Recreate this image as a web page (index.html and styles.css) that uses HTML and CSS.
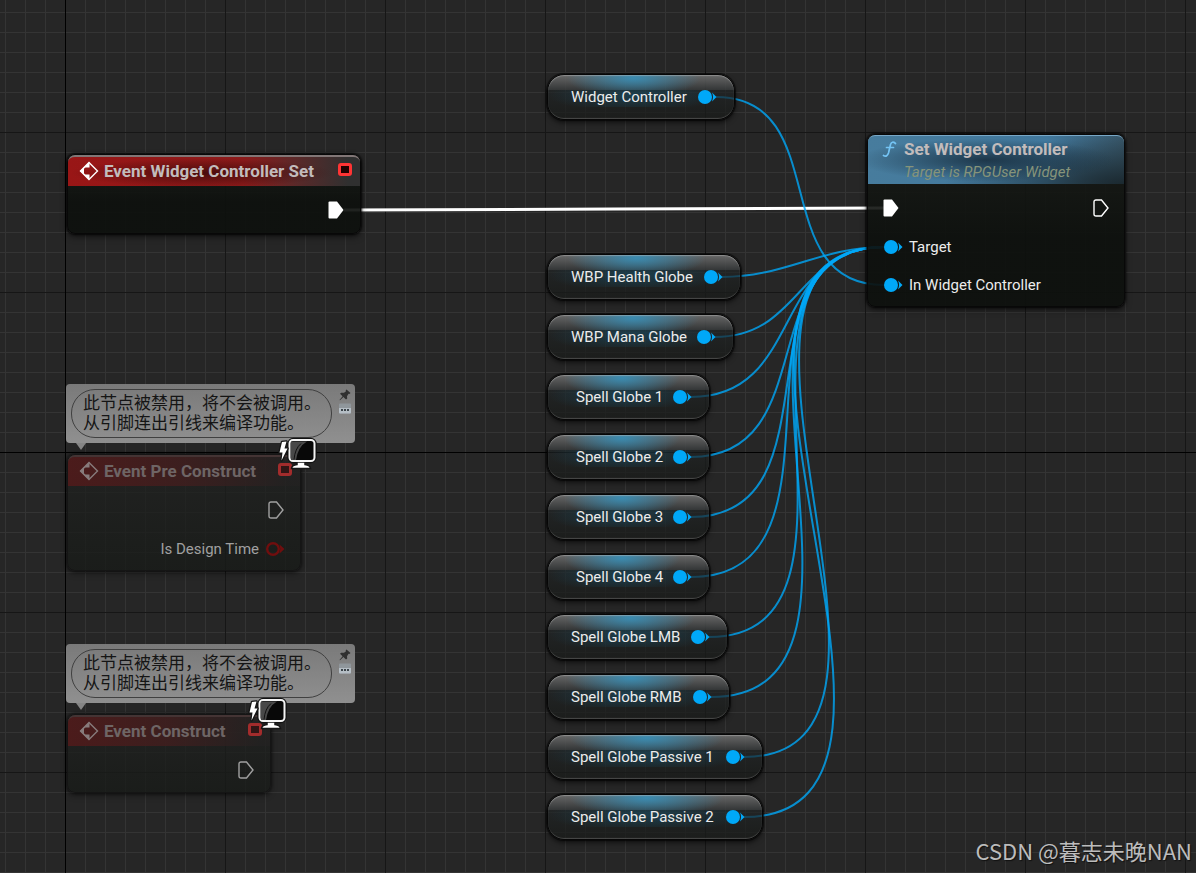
FILE: index.html
```html
<!DOCTYPE html>
<html lang="zh-CN">
<head>
<meta charset="utf-8">
<title>Event Graph</title>
<link rel="stylesheet" href="styles.css">
</head>
<body>
<svg class="defs" aria-hidden="true">
  <symbol id="event" viewBox="0 0 20 20">
    <path d="M10 1.500 18.500 10 10 18.500 1.500 10Z" fill="none" stroke="currentColor" stroke-width="1.400"/>
    <path d="M10.500 1v5.500H6.500Q5 6.500 5 8v4q0 1.500 1.500 1.500h4V19L1 10Z" fill="currentColor"/>
  </symbol>
  <symbol id="exec" viewBox="0 0 16 18">
    <path d="M3 1h5.500L15 9l-6.500 8H3Q1 17 1 15V3Q1 1 3 1Z" fill="none" stroke="currentColor" stroke-width="1.400"/>
  </symbol>
  <symbol id="exec-on" viewBox="0 0 16 18">
    <path d="M1.500.5h7.500L15.500 9 9 17.500H1.500Q.5 17.500.5 16.500v-15Q.5.5 1.500.5Z" fill="currentColor"/>
  </symbol>
  <symbol id="pin-on" viewBox="0 0 20 16">
    <circle cx="8" cy="8" r="7" fill="currentColor"/>
    <path d="M15 3.500 19.500 8 15 12.500q2-4.500 0-9Z" fill="currentColor"/>
  </symbol>
  <symbol id="pin-off" viewBox="0 0 20 16">
    <circle cx="8" cy="8" r="5.800" fill="none" stroke="currentColor" stroke-width="2.400"/>
    <path d="M14.500 3.500 19.500 8l-5 4.500q1.500-4.500 0-9Z" fill="currentColor"/>
  </symbol>
  <symbol id="tack" viewBox="0 0 12 12">
    <path d="M7.500.5 11.500 4 10.300 5 9.500 4.800 8 7.200 8.200 9.500 7 10.500 4.400 8 1 11.200.5 11 3.600 7.200 1 4.800 2.200 3.700 5 3.800 7 2.200 6.700 1.300Z" fill="#303030"/>
  </symbol>
  <symbol id="speech" viewBox="0 0 12 11">
    <path d="M1 0h10q1 0 1 1v8q0 1-1 1H1Q0 10 0 9V1Q0 0 1 0Z" fill="#8f969b"/>
    <path d="M0 4.500h12V9q0 1-1 1H1Q0 10 0 9Z" fill="#b5bec5"/>
    <path d="M2 5.500h2v2H2zM5 5.500h2v2H5zM8 5.500h2v2H8z" fill="#3c444a"/>
  </symbol>
  <symbol id="monitor" viewBox="0 0 40 34">
    <rect x="11.500" y="3" width="25" height="21" rx="4" fill="#080808" stroke="#111" stroke-width="4.500"/>
    <path d="M19 25h8v2.500q5 .5 5.500 4H13.500q.5-3.500 5.500-4Z" fill="#fff" stroke="#161616" stroke-width="1.500"/>
    <rect x="11.500" y="3" width="25" height="21" rx="3.500" fill="#080808" stroke="#f4f4f4" stroke-width="2"/>
    <path d="M13 4.500h16q-9 5-11 18.500h-5Z" fill="#484848"/>
    <path d="M23 6.500q-6 5-7 16" stroke="#111" fill="none"/>
    <path d="M4 5 8.500 4.500 6.500 11.500h3L3.500 23.500 4.500 15.500H1.500Z" fill="#fff" stroke="#161616" stroke-width="2.500" paint-order="stroke" stroke-linejoin="round"/>
  </symbol>
</svg>

<main class="graph">
  <svg class="wires" aria-hidden="true">
    <path class="wire-exec" d="M344 210C524 210 704 208 884 208"/>
    <path d="M716 97C835 97 765 285 884 285"/>
    <path d="M722 277C786 277 820 247 884 247"/>
    <path d="M715 337C801 337 798 247 884 247"/>
    <path d="M691 397C805 397 770 247 884 247"/>
    <path d="M691 457C825 457 750 247 884 247"/>
    <path d="M691 517C845 517 730 247 884 247"/>
    <path d="M691 577C865 577 710 247 884 247"/>
    <path d="M709 637C897 637 696 247 884 247"/>
    <path d="M711 697C919 697 676 247 884 247"/>
    <path d="M744 757C961 757 667 247 884 247"/>
    <path d="M744 817C981 817 647 247 884 247"/>
  </svg>

  <article class="node event set-event">
    <header class="head"><svg class="ico"><use href="#event"/></svg><h2>Event Widget Controller Set</h2><i class="delegate"></i></header>
    <div class="pin out"><svg class="exec"><use href="#exec-on"/></svg></div>
  </article>

  <article class="node function">
    <header class="head">
      <svg class="fn" viewBox="0 0 16 18"><path d="M13.500 3.500Q10 .5 8.500 4.500L6.500 13Q5 17.500 1.500 15.500M4.500 7.500h7" fill="none" stroke="#74c4f4" stroke-width="1.700" stroke-linecap="round"/></svg>
      <div><h2>Set Widget Controller</h2><p>Target is RPGUser Widget</p></div>
    </header>
    <div class="pin both"><svg class="exec"><use href="#exec-on"/></svg><svg class="exec"><use href="#exec"/></svg></div>
    <div class="pin"><svg class="dot"><use href="#pin-on"/></svg><span>Target</span></div>
    <div class="pin"><svg class="dot"><use href="#pin-on"/></svg><span>In Widget Controller</span></div>
  </article>

  <aside class="bubble bubble-pre">
    <p>此节点被禁用，将不会被调用。<br>从引脚连出引线来编译功能。</p>
    <div class="tools"><button aria-label="固定"><svg><use href="#tack"/></svg></button><button aria-label="注释"><svg><use href="#speech"/></svg></button></div>
  </aside>
  <article class="node event pre-construct disabled">
    <header class="head"><svg class="ico"><use href="#event"/></svg><h2>Event Pre Construct</h2><i class="delegate"></i></header>
    <div class="pin out"><svg class="exec"><use href="#exec"/></svg></div>
    <div class="pin out"><span>Is Design Time</span><svg class="dot bool"><use href="#pin-off"/></svg></div>
    <svg class="monitor"><use href="#monitor"/></svg>
  </article>

  <aside class="bubble bubble-construct">
    <p>此节点被禁用，将不会被调用。<br>从引脚连出引线来编译功能。</p>
    <div class="tools"><button aria-label="固定"><svg><use href="#tack"/></svg></button><button aria-label="注释"><svg><use href="#speech"/></svg></button></div>
  </aside>
  <article class="node event construct disabled">
    <header class="head"><svg class="ico"><use href="#event"/></svg><h2>Event Construct</h2><i class="delegate"></i></header>
    <div class="pin out"><svg class="exec"><use href="#exec"/></svg></div>
    <svg class="monitor"><use href="#monitor"/></svg>
  </article>

  <article class="variable controller"><span>Widget Controller</span><svg class="dot"><use href="#pin-on"/></svg></article>
  <section class="globes">
    <article class="variable health"><span>WBP Health Globe</span><svg class="dot"><use href="#pin-on"/></svg></article>
    <article class="variable mana"><span>WBP Mana Globe</span><svg class="dot"><use href="#pin-on"/></svg></article>
    <article class="variable spell"><span>Spell Globe 1</span><svg class="dot"><use href="#pin-on"/></svg></article>
    <article class="variable spell"><span>Spell Globe 2</span><svg class="dot"><use href="#pin-on"/></svg></article>
    <article class="variable spell"><span>Spell Globe 3</span><svg class="dot"><use href="#pin-on"/></svg></article>
    <article class="variable spell"><span>Spell Globe 4</span><svg class="dot"><use href="#pin-on"/></svg></article>
    <article class="variable lmb"><span>Spell Globe LMB</span><svg class="dot"><use href="#pin-on"/></svg></article>
    <article class="variable rmb"><span>Spell Globe RMB</span><svg class="dot"><use href="#pin-on"/></svg></article>
    <article class="variable passive"><span>Spell Globe Passive 1</span><svg class="dot"><use href="#pin-on"/></svg></article>
    <article class="variable passive"><span>Spell Globe Passive 2</span><svg class="dot"><use href="#pin-on"/></svg></article>
  </section>
  <div class="watermark">CSDN @暮志未晚NAN</div>
</main>
</body>
</html>
```
FILE: styles.css
```css
* { box-sizing: border-box; }
body { margin: 0; background: #262626; }
h2, p { margin: 0; font-weight: inherit; font-size: inherit; }
svg { display: block; flex: none; }
.defs { position: absolute; width: 0; height: 0; }

.graph {
  position: relative;
  min-height: 100vh;
  overflow: hidden;
  font: 15px/20px Roboto, "Noto Sans CJK SC", sans-serif;
  color: #ececec;
  background-color: #262626;
  background-image:
    linear-gradient(90deg, #000 1px, transparent 1px),
    linear-gradient(#000 1px, transparent 1px),
    linear-gradient(90deg, #161616 1px, transparent 1px),
    linear-gradient(#161616 1px, transparent 1px),
    linear-gradient(90deg, #343434 1px, transparent 1px),
    linear-gradient(#343434 1px, transparent 1px);
  background-size: 1280px 1280px, 1280px 1280px, 160px 160px, 160px 160px, 20px 20px, 20px 20px;
  background-position: 65px 0, 0 452px, 65px 0, 0 132px, 5px 0, 0 12px;
}

.wires { position: absolute; inset: 0; width: 100%; height: 100%; }
.wires path { fill: none; stroke: #00a8f8; stroke-width: 2; opacity: .8; }
.wires .wire-exec { stroke: #fff; stroke-width: 3; opacity: 1; }

/* Nodes on the canvas */
.node {
  position: absolute;
  border: 1px solid #080808;
  border-radius: 8px;
  background: linear-gradient(rgba(24, 27, 23, .87), rgba(13, 16, 13, .92) 60%);
  box-shadow: 0 0 2px 1px rgba(0, 0, 0, .75), 0 3px 6px rgba(0, 0, 0, .5);
}
.set-event { left: 67px; top: 154px; width: 294px; height: 80px; }
.function { left: 867px; top: 134px; width: 258px; height: 173px; }
.pre-construct { left: 67px; top: 454px; width: 234px; height: 117px; }
.construct { left: 67px; top: 714px; width: 204px; height: 79px; }

.head {
  display: flex;
  align-items: center;
  gap: 5px;
  height: 31px;
  padding: 0 8px 2px 11px;
  border-radius: 7px 7px 0 0;
  font-size: 17px;
  font-weight: 700;
  color: #c2bcbc;
}
.event .head {
  border-top: 2px solid #817676;
  background:
    radial-gradient(ellipse 45% 50% at 46% 55%, rgba(50, 8, 8, .75), transparent),
    linear-gradient(90deg, #991616, #8c1a1a 60%, #5b2929 78%, #303030 96%);
}
.ico { width: 20px; height: 20px; color: #fff; }
.delegate {
  width: 14px;
  height: 13px;
  margin: 0 0 2px auto;
  border: 3px solid #ff3434;
  border-radius: 3px;
  background: #220202;
}
.function .head {
  align-items: flex-start;
  gap: 6px;
  height: 49px;
  padding: 3px 8px 0 14px;
  border-top: 1px solid #78a7c6;
  background:
    radial-gradient(ellipse 50% 45% at 46% 50%, rgba(23, 44, 60, .85), transparent),
    radial-gradient(ellipse 70% 100% at 100% 100%, #1b2930, transparent),
    linear-gradient(90deg, #477c9d, #41789d 70%, #385668);
}
.function .head p {
  padding-top: 3px;
  font: italic 400 15px/20px Roboto, sans-serif;
  color: #86947a;
}
.fn { width: 16px; height: 18px; margin-top: 1px; }

.pin { display: flex; align-items: center; gap: 6px; height: 38px; padding: 0 15px; }
.head + .pin { height: 48px; }
.event .pin + .pin { height: 30px; }
.function .pin + .pin { margin-top: -4px; margin-bottom: 4px; }
.pin.out { justify-content: flex-end; }
.pin.both { justify-content: space-between; }
.pin.out .exec { margin-right: 1px; }
.exec { width: 16px; height: 18px; color: #fff; }
.dot { width: 20px; height: 16px; color: #00a8f8; }

/* Disabled nodes */
.disabled {
  background: linear-gradient(rgba(32, 33, 32, .72), rgba(23, 26, 23, .78));
  border-color: #151515;
  box-shadow: 0 0 3px 1px rgba(0, 0, 0, .5), 0 3px 6px rgba(0, 0, 0, .3);
}
.disabled .head {
  border-top-color: #443434;
  color: #6e6565;
  background: linear-gradient(90deg, rgba(83, 26, 26, .85), rgba(66, 30, 30, .8) 50%, rgba(36, 34, 34, .6) 95%);
}
.disabled .ico { color: #877c7c; }
.disabled .exec, .disabled .pin { color: #a0a0a0; }
.disabled .bool { color: #700e0e; }
.disabled .delegate { border-color: #a32c2c; background: #321616; }
.monitor { position: absolute; top: -18px; right: -18px; width: 40px; height: 34px; }

.bubble {
  position: absolute;
  left: 66px;
  display: flex;
  justify-content: space-between;
  width: 289px;
  height: 59px;
  padding: 5px 4px 5px 5px;
  border-radius: 4px;
  background: linear-gradient(rgba(126, 126, 126, .95), rgba(148, 148, 148, .96));
  color: #151515;
  font-size: 17px;
}
.bubble::after {
  content: "";
  position: absolute;
  left: 10px;
  top: 100%;
  border: 5px solid transparent;
  border-top: 7px solid #858585;
  border-bottom: 0;
}
.bubble-pre { top: 384px; }
.bubble-construct { top: 644px; }
.bubble p { width: 261px; padding: 3px 0 5px 11px; border: 1px solid #404040; border-radius: 24px; white-space: nowrap; }
.tools { display: flex; flex-direction: column; gap: 2px; }
.tools button { width: 12px; height: 12px; padding: 0; border: 0; background: none; }
.tools svg { width: 12px; height: 12px; }

/* Variable getters */
.globes { position: absolute; left: 547px; top: 254px; display: flex; flex-direction: column; align-items: flex-start; gap: 14px; }
.variable {
  display: flex;
  align-items: center;
  justify-content: space-between;
  height: 46px;
  padding: 0 17px 0 23px;
  border: 1px solid #060606;
  border-radius: 17px;
  background:
    radial-gradient(ellipse 36% 130% at 46% 20%, rgba(50, 150, 196, .8), transparent) 0 0 / 100% 15px no-repeat,
    radial-gradient(ellipse 46% 100% at 46% 30%, rgba(24, 76, 98, .65), transparent) 0 15px / 100% 17px no-repeat,
    linear-gradient(rgba(110, 110, 110, .9), rgba(55, 58, 59, .8)) 0 0 / 100% 15px no-repeat,
    linear-gradient(rgba(31, 35, 36, .65), rgba(24, 26, 24, .75)) 0 15px / 100% 29px no-repeat;
  box-shadow: inset 0 1px 1px rgba(190, 190, 190, .45), inset 0 -2px 1px -1px rgba(120, 120, 120, .5), 0 0 1px 1px rgba(0, 0, 0, .6), 0 3px 5px rgba(0, 0, 0, .55);
}
.controller { position: absolute; left: 547px; top: 74px; width: 188px; }
.health { width: 194px; }
.mana { width: 187px; }
.spell { width: 163px; padding-left: 28px; }
.lmb { width: 181px; }
.rmb { width: 183px; }
.passive { width: 216px; }

.watermark {
  position: absolute;
  right: 4px;
  bottom: 8px;
  font: 22px/30px "Noto Sans CJK SC", sans-serif;
  color: #bcbcbc;
  text-shadow: 1px 1px 1px #111;
}
```
